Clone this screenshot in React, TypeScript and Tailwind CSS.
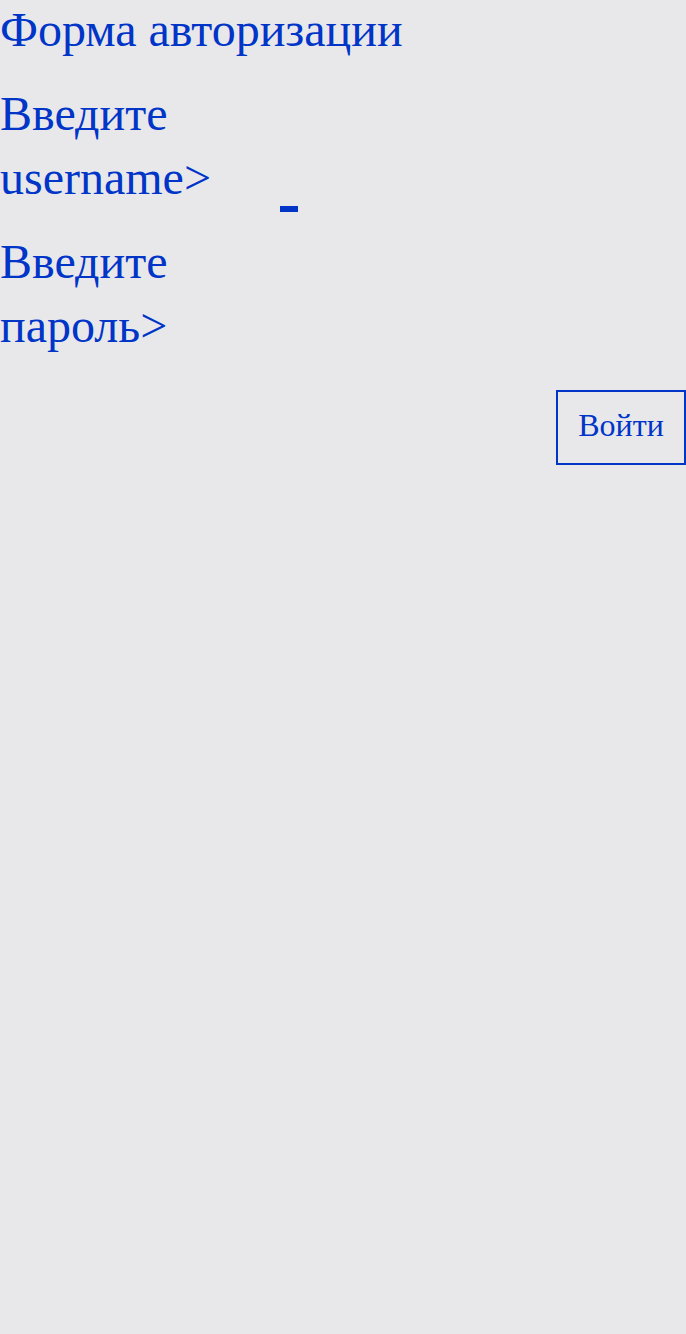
import React from "react";

export default function App() {
  return (
    <div
      className="min-h-[1334px] w-full bg-[#e8e8ea] text-[#0035c8]"
      style={{ fontFamily: '"Liberation Serif", "Times New Roman", serif' }}
    >
      <h1 className="m-0 pt-[2px] text-[48px] font-normal leading-[55px]">Форма авторизации</h1>
      <form className="mt-[25px] flex flex-col" onSubmit={(e) => e.preventDefault()}>
        <div className="flex items-end">
          <label className="w-[280px] text-[48px] leading-[64px]">
            Введите
            <br />
            username&gt;
          </label>
          <input
            type="text"
            className="mb-[-2px] h-[6px] w-[18px] border-0 bg-[#0035c8] p-0 outline-none"
          />
        </div>
        <div className="mt-[20px] flex items-end">
          <label className="w-[280px] text-[48px] leading-[64px]">
            Введите
            <br />
            пароль&gt;
          </label>
        </div>
        <div className="mt-[32px] flex justify-end">
          <button
            type="submit"
            className="h-[75px] w-[130px] border-2 border-[#0035c8] bg-transparent pb-[4px] text-[32px] leading-[37px] text-[#0035c8]"
            style={{ fontFamily: '"Liberation Serif", "Times New Roman", serif' }}
          >
            Войти
          </button>
        </div>
      </form>
    </div>
  );
}
